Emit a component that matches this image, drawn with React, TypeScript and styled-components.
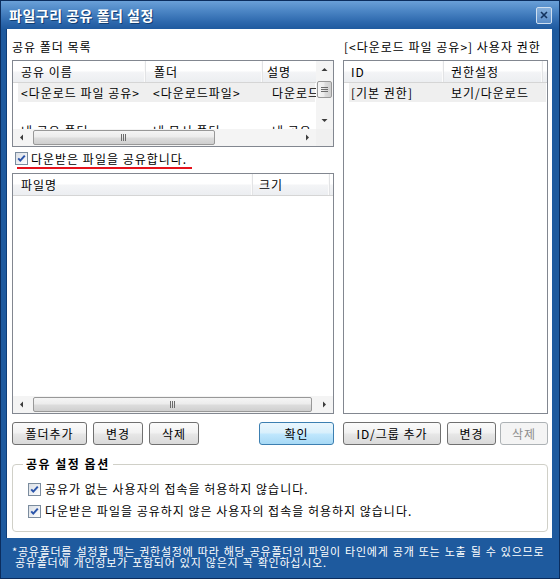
import React from 'react';
import styled, { createGlobalStyle } from 'styled-components';

const FONT = `"Noto Sans CJK KR", "Noto Sans", sans-serif`;

const Global = createGlobalStyle`
  html, body { margin: 0; padding: 0; background: #fff; }
  body { font-family: ${FONT}; font-size: 12px; color: #000; letter-spacing: 1px; }
  * { box-sizing: border-box; }
`;

const Window = styled.div`
  width: 560px;
  height: 579px;
  background: #1e5a9e;
  border: 1px solid #0b2d5e;
  display: flex;
  flex-direction: column;
`;

const TitleBar = styled.div`
  height: 28px;
  flex: none;
  background: linear-gradient(#6aa0d8 0%, #4c86c5 35%, #2d68ad 75%, #1f5a9f 100%);
  display: flex;
  align-items: center;
  justify-content: space-between;
  padding: 0 7px 0 8px;
`;

const TitleText = styled.div`
  color: #fff;
  font-weight: bold;
  font-size: 14px;
  letter-spacing: 0.5px;
  line-height: 16px;
  text-shadow: 1px 1px 0 #133f73;
`;

const CloseBtn = styled.div`
  width: 16px;
  height: 17px;
  border: 1px solid #cfdff0;
  border-radius: 2px;
  background: linear-gradient(#86b0dc, #5a8cc7);
  display: flex;
  align-items: center;
  justify-content: center;
`;

const Body = styled.div`
  flex: 1;
  display: flex;
  padding: 0 7px 0 5px;
`;

const Panel = styled.div`
  flex: 1;
  background: #fff;
  border-left: 1px solid #0f3d78;
  padding: 8px 4px 6px 5px;
  display: flex;
  flex-direction: column;
`;

const TopGrid = styled.div`
  display: grid;
  grid-template-columns: 322px 205px;
  column-gap: 9px;
`;

const Column = styled.div`
  display: flex;
  flex-direction: column;
`;

const Label = styled.div<{ $indent?: number }>`
  height: 20px;
  line-height: 20px;
  margin-bottom: 3px;
  padding-left: ${p => p.$indent ?? 0}px;
  white-space: nowrap;
`;

const ListBox = styled.div<{ $h: number; $cols: string; $rows: string }>`
  height: ${p => p.$h}px;
  flex: none;
  border: 1px solid #828790;
  background: #fff;
  display: grid;
  grid-template-columns: ${p => p.$cols};
  grid-template-rows: ${p => p.$rows};
  overflow: hidden;
`;

const ListContent = styled.div`
  overflow: hidden;
  min-width: 0;
  min-height: 0;
`;

const Header = styled.div<{ $cols: string }>`
  display: grid;
  grid-template-columns: ${p => p.$cols};
  height: 22px;
  background: linear-gradient(#ffffff 0%, #ffffff 45%, #f3f4f6 55%, #eceef1 100%);
  border-bottom: 1px solid #d5d5d5;
  white-space: nowrap;
`;

const HeaderCell = styled.div<{ $pad?: number }>`
  line-height: 21px;
  padding-left: ${p => p.$pad ?? 8}px;
  border-right: 1px solid #e2e3e5;
  box-shadow: inset -1px 0 0 #fbfbfb;
  overflow: hidden;
`;

const Row = styled.div<{ $cols: string; $sel?: boolean }>`
  display: grid;
  grid-template-columns: ${p => p.$cols};
  height: 19px;
  margin: 0 1px 0 5px;
  background: ${p => (p.$sel ? '#efefef' : 'transparent')};
  white-space: nowrap;
`;

const Cell = styled.div<{ $pad?: number }>`
  line-height: 19px;
  padding-left: ${p => p.$pad ?? 8}px;
  overflow: hidden;
`;

const VScroll = styled.div`
  display: flex;
  flex-direction: column;
  background: #f4f4f4;
`;

const HScroll = styled.div`
  display: flex;
  background: #f4f4f4;
`;

const ArrowBtn = styled.div`
  width: 17px;
  height: 17px;
  flex: none;
  display: flex;
  align-items: center;
  justify-content: center;
`;

const VTrack = styled.div`
  flex: 1;
  display: flex;
  flex-direction: column;
  align-items: center;
`;

const HTrack = styled.div`
  flex: 1;
  display: flex;
  align-items: center;
`;

const VThumb = styled.div<{ $off: number; $len: number }>`
  margin-top: ${p => p.$off}px;
  width: 15px;
  height: ${p => p.$len}px;
  border: 1px solid #989898;
  border-radius: 2px;
  background: linear-gradient(to right, #f5f5f5 0%, #ececec 45%, #dcdcdc 55%, #cfcfcf 100%);
  display: flex;
  align-items: center;
  justify-content: center;
`;

const HThumb = styled.div<{ $off: number; $len: number }>`
  margin-left: ${p => p.$off}px;
  width: ${p => p.$len}px;
  height: 15px;
  border: 1px solid #989898;
  border-radius: 2px;
  background: linear-gradient(#f5f5f5 0%, #ececec 45%, #dcdcdc 55%, #cfcfcf 100%);
  display: flex;
  align-items: center;
  justify-content: center;
`;

const Corner = styled.div`
  background: #f0f0f0;
`;

const CheckRow = styled.div`
  height: 26px;
  flex: none;
  padding: 5px 0 0 3px;
`;

const CheckLine = styled.label`
  display: flex;
  align-items: center;
  gap: 3px;
  height: 13px;
  line-height: 13px;
  white-space: nowrap;
`;

const RedUnderline = styled.div`
  margin: 2px 0 0 2px;
  width: 175px;
  height: 2px;
  background: #e5121c;
`;

const ButtonRow = styled.div`
  margin-top: 8px;
  height: 23px;
  display: flex;
`;

const Btn = styled.button<{ $w: number; $gap?: number; $primary?: boolean; $push?: boolean }>`
  width: ${p => p.$w}px;
  height: 23px;
  margin-left: ${p => (p.$push ? 'auto' : `${p.$gap ?? 0}px`)};
  padding: 0;
  font: 12px ${FONT};
  letter-spacing: 1px;
  line-height: 21px;
  color: #000;
  border-radius: 3px;
  border: 1px solid ${p => (p.$primary ? '#3c7fb1' : '#707070')};
  background: ${p =>
    p.$primary
      ? 'linear-gradient(#eaf6fd 0%, #d9f0fc 45%, #bee6fd 55%, #a7d9f5 100%)'
      : 'linear-gradient(#fbfbfb 0%, #f2f2f2 45%, #e6e6e6 55%, #dadada 100%)'};
  &:disabled {
    border-color: #adb2b5;
    background: #f4f4f4;
    color: #8d8d8d;
  }
`;

const GroupBox = styled.fieldset`
  margin: 12px 0 0 0;
  min-width: 0;
  border: 1px solid #d0d0c8;
  border-radius: 4px;
  padding: 9px 14px 11px 15px;
  display: flex;
  flex-direction: column;
  gap: 4px;
`;

const Legend = styled.legend`
  margin-left: -5px;
  padding: 0 3px;
  font-weight: bold;
  font-size: 12px;
  line-height: 14px;
  letter-spacing: 1.5px;
`;

const OptionLine = styled.label`
  display: flex;
  align-items: center;
  gap: 4px;
  height: 18px;
  line-height: 18px;
  white-space: nowrap;
`;

const Footer = styled.div`
  height: 40px;
  flex: none;
  padding: 8px 0 0 11px;
  color: #fff;
  font-size: 11px;
  line-height: 11px;
  letter-spacing: 0.75px;
  word-spacing: 1px;
  white-space: nowrap;
`;

const FooterLine = styled.div<{ $indent?: number }>`
  padding-left: ${p => p.$indent ?? 0}px;
`;

const Check = () => (
  <svg width="13" height="13" viewBox="0 0 13 13" style={{ flex: 'none' }}>
    <defs>
      <linearGradient id="cbfill" x1="0" y1="0" x2="1" y2="1">
        <stop offset="0" stopColor="#d8dde4" />
        <stop offset="1" stopColor="#ffffff" />
      </linearGradient>
    </defs>
    <rect x="0.5" y="0.5" width="12" height="12" fill="url(#cbfill)" stroke="#7b8c9e" />
    <path d="M3.2 6.3 L5.3 8.6 L9.8 3.6" fill="none" stroke="#2b55aa" strokeWidth="2" />
  </svg>
);

const Arrow = ({ dir }: { dir: 'up' | 'down' | 'left' | 'right' }) => {
  const d = {
    up: 'M0.5 4 L3.5 1 L6.5 4 Z',
    down: 'M0.5 1 L3.5 4 L6.5 1 Z',
    left: 'M4 0.5 L1 3.5 L4 6.5 Z',
    right: 'M1 0.5 L4 3.5 L1 6.5 Z',
  }[dir];
  const vertical = dir === 'up' || dir === 'down';
  return (
    <svg width={vertical ? 7 : 5} height={vertical ? 5 : 7} viewBox={vertical ? '0 0 7 5' : '0 0 5 7'}>
      <path d={d} fill="#3c3c3c" />
    </svg>
  );
};

const GripV = () => (
  <svg width="7" height="6" viewBox="0 0 7 6">
    <path d="M0 0.5 H7 M0 2.5 H7 M0 4.5 H7" stroke="#6b6b6b" strokeWidth="1" />
  </svg>
);

const GripH = () => (
  <svg width="6" height="7" viewBox="0 0 6 7">
    <path d="M0.5 0 V7 M2.5 0 V7 M4.5 0 V7" stroke="#6b6b6b" strokeWidth="1" />
  </svg>
);

const CloseX = () => (
  <svg width="8" height="8" viewBox="0 0 8 8">
    <path d="M1 1 L7 7 M7 1 L1 7" stroke="#14335e" strokeWidth="1.6" />
  </svg>
);

const SHARE_HDR = '133px 117px 120px';
const SHARE_ROW = '128px 117px 120px';
const FILE_HDR = '240px 77px 10px';
const PERM_HDR = '100px 99px 1fr';
const PERM_ROW = '95px 99px 1fr';

export default function App() {
  return (
    <>
      <Global />
      <Window>
        <TitleBar>
          <TitleText>파일구리 공유 폴더 설정</TitleText>
          <CloseBtn>
            <CloseX />
          </CloseBtn>
        </TitleBar>
        <Body>
          <Panel>
            <TopGrid>
              <Column>
                <Label>공유 폴더 목록</Label>
                <ListBox $h={87} $cols="1fr 17px" $rows="1fr 17px">
                  <ListContent>
                    <Header $cols={SHARE_HDR}>
                      <HeaderCell>공유 이름</HeaderCell>
                      <HeaderCell>폴더</HeaderCell>
                      <HeaderCell $pad={4}>설명</HeaderCell>
                    </Header>
                    <Row $cols={SHARE_ROW} $sel>
                      <Cell $pad={3}>&lt;다운로드 파일 공유&gt;</Cell>
                      <Cell $pad={7}>&lt;다운로드파일&gt;</Cell>
                      <Cell $pad={9}>다운로드 파일 공유</Cell>
                    </Row>
                    <Row $cols={SHARE_ROW} />
                    <Row $cols={SHARE_ROW}>
                      <Cell $pad={3}>내 공유 폴더</Cell>
                      <Cell $pad={7}>내 문서 폴더</Cell>
                      <Cell $pad={9}>내 공유</Cell>
                    </Row>
                  </ListContent>
                  <VScroll>
                    <ArrowBtn>
                      <Arrow dir="up" />
                    </ArrowBtn>
                    <VTrack>
                      <VThumb $off={3} $len={17}>
                        <GripV />
                      </VThumb>
                    </VTrack>
                    <ArrowBtn>
                      <Arrow dir="down" />
                    </ArrowBtn>
                  </VScroll>
                  <HScroll>
                    <ArrowBtn>
                      <Arrow dir="left" />
                    </ArrowBtn>
                    <HTrack>
                      <HThumb $off={3} $len={182}>
                        <GripH />
                      </HThumb>
                    </HTrack>
                    <ArrowBtn>
                      <Arrow dir="right" />
                    </ArrowBtn>
                  </HScroll>
                  <Corner />
                </ListBox>
                <CheckRow>
                  <CheckLine>
                    <Check />
                    <span>다운받은 파일을 공유합니다.</span>
                  </CheckLine>
                  <RedUnderline />
                </CheckRow>
                <ListBox $h={241} $cols="1fr" $rows="1fr 17px">
                  <ListContent>
                    <Header $cols={FILE_HDR}>
                      <HeaderCell>파일명</HeaderCell>
                      <HeaderCell $pad={6}>크기</HeaderCell>
                      <HeaderCell />
                    </Header>
                  </ListContent>
                  <HScroll>
                    <ArrowBtn>
                      <Arrow dir="left" />
                    </ArrowBtn>
                    <HTrack>
                      <HThumb $off={3} $len={279}>
                        <GripH />
                      </HThumb>
                    </HTrack>
                    <ArrowBtn>
                      <Arrow dir="right" />
                    </ArrowBtn>
                  </HScroll>
                </ListBox>
                <ButtonRow>
                  <Btn $w={75}>폴더추가</Btn>
                  <Btn $w={50} $gap={6}>변경</Btn>
                  <Btn $w={50} $gap={6}>삭제</Btn>
                  <Btn $w={75} $primary $push>확인</Btn>
                </ButtonRow>
              </Column>
              <Column>
                <Label $indent={1}>[&lt;다운로드 파일 공유&gt;] 사용자 권한</Label>
                <ListBox $h={354} $cols="1fr" $rows="1fr">
                  <ListContent>
                    <Header $cols={PERM_HDR}>
                      <HeaderCell $pad={7}>ID</HeaderCell>
                      <HeaderCell $pad={7}>권한설정</HeaderCell>
                      <HeaderCell />
                    </Header>
                    <Row $cols={PERM_ROW} $sel>
                      <Cell $pad={2}>[기본 권한]</Cell>
                      <Cell $pad={7}>보기/다운로드</Cell>
                      <Cell />
                    </Row>
                  </ListContent>
                </ListBox>
                <ButtonRow>
                  <Btn $w={98}>ID/그룹 추가</Btn>
                  <Btn $w={49} $gap={6}>변경</Btn>
                  <Btn $w={48} $gap={4} disabled>삭제</Btn>
                </ButtonRow>
              </Column>
            </TopGrid>
            <GroupBox>
              <Legend>공유 설정 옵션</Legend>
              <OptionLine>
                <Check />
                <span>공유가 없는 사용자의 접속을 허용하지 않습니다.</span>
              </OptionLine>
              <OptionLine>
                <Check />
                <span>다운받은 파일을 공유하지 않은 사용자의 접속을 허용하지 않습니다.</span>
              </OptionLine>
            </GroupBox>
          </Panel>
        </Body>
        <Footer>
          <FooterLine>*공유폴더를 설정할 때는 권한설정에 따라 해당 공유폴더의 파일이 타인에게 공개 또는 노출 될 수 있으므로</FooterLine>
          <FooterLine $indent={3}>공유폴더에 개인정보가 포함되어 있지 않은지 꼭 확인하십시오.</FooterLine>
        </Footer>
      </Window>
    </>
  );
}
